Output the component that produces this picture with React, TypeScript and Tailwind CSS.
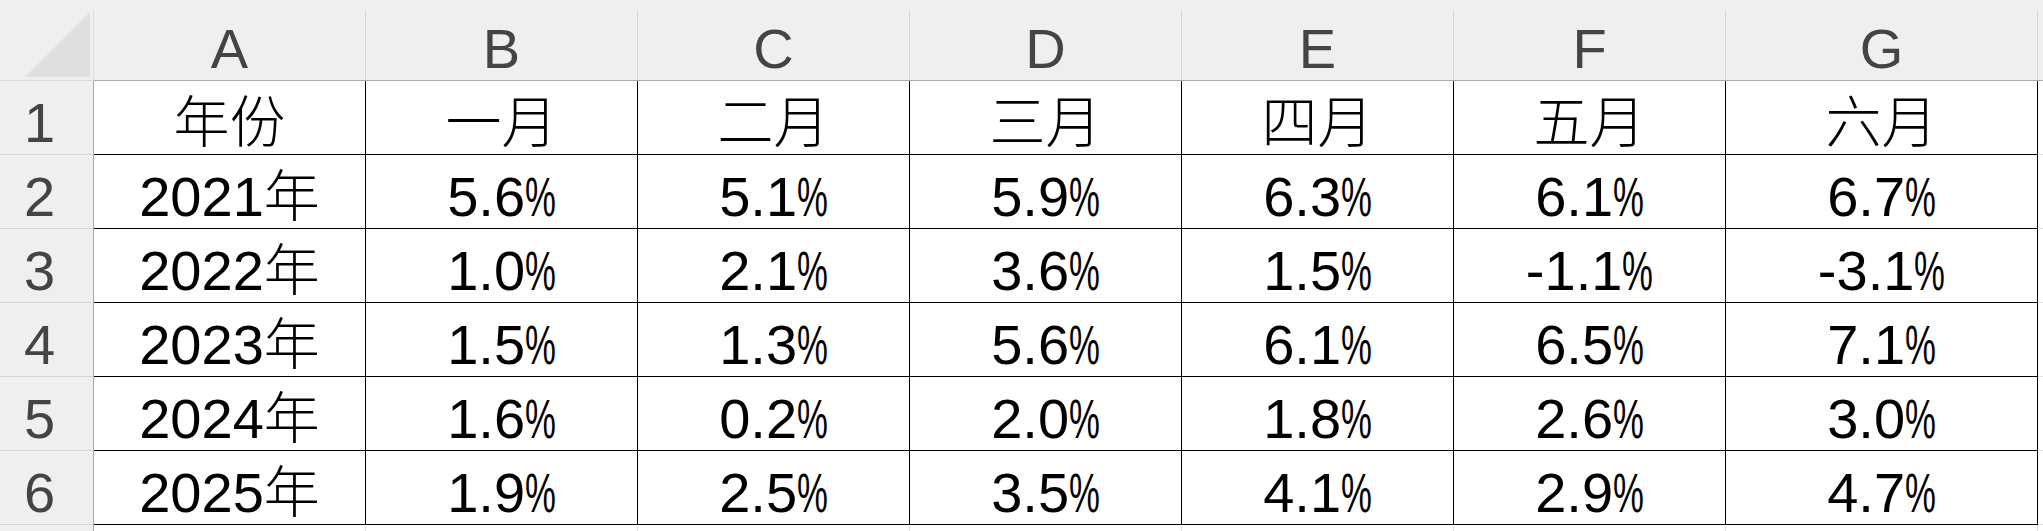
import React from "react";

const cols = ["A", "B", "C", "D", "E", "F", "G"];
const data: string[][] = [
  ["年份", "一月", "二月", "三月", "四月", "五月", "六月"],
  ["2021年", "5.6%", "5.1%", "5.9%", "6.3%", "6.1%", "6.7%"],
  ["2022年", "1.0%", "2.1%", "3.6%", "1.5%", "-1.1%", "-3.1%"],
  ["2023年", "1.5%", "1.3%", "5.6%", "6.1%", "6.5%", "7.1%"],
  ["2024年", "1.6%", "0.2%", "2.0%", "1.8%", "2.6%", "3.0%"],
  ["2025年", "1.9%", "2.5%", "3.5%", "4.1%", "2.9%", "4.7%"],
];

const gridCols = "grid grid-cols-[94px_repeat(6,272px)_312px_1fr]";

function CellText({ text }: { text: string }) {
  if (text.endsWith("%")) {
    return (
      <span className="whitespace-nowrap">
        {text.slice(0, -1)}
        <span className="inline-block w-[0.55em] origin-left scale-x-[0.62]">%</span>
      </span>
    );
  }
  return <span className="whitespace-nowrap">{text}</span>;
}

export default function App() {
  return (
    <div className="h-[531px] w-full overflow-hidden bg-white font-['Liberation_Sans','Noto_Sans_CJK_SC',sans-serif] text-[56px] leading-none">
      {/* Column header row */}
      <div className={`${gridCols} h-[81px]`}>
        <div className="flex h-[81px] bg-[#efefef] border-b border-[#dadada]">
          <div className="flex flex-1 items-end justify-end pb-[3px] pr-[3px]">
            <svg width="65" height="65" viewBox="0 0 65 65">
              <polygon points="0,65 65,65 65,0" fill="#dfdfdf" />
            </svg>
          </div>
          <div className="w-px h-[70px] self-end bg-[#dedede]" />
        </div>
        {cols.map((c) => (
          <div key={c} className="flex h-[81px] bg-[#efefef] border-b border-[#ababab]">
            <div className="flex-1 pt-[21px] text-center text-[#444444]">{c}</div>
            <div className="w-px h-[70px] self-end bg-[#d6d6d6]" />
          </div>
        ))}
        <div className="h-[81px] bg-[#efefef] border-b border-[#ababab]" />
      </div>

      {/* Data rows */}
      {data.map((row, ri) => (
        <div key={ri} className={`${gridCols} h-[74px]`}>
          <div className="h-[74px] bg-[#efefef] border-r border-b border-r-[#a8a8a8] border-b-[#d6d6d6] pr-[14px] pt-[14px] text-center text-[#444444]">
            {ri + 1}
          </div>
          {row.map((cell, ci) => (
            <div
              key={ci}
              className="h-[74px] border-r border-b border-black pt-[14px] text-center font-light text-black"
            >
              <CellText text={cell} />
            </div>
          ))}
          <div className="h-[74px] border-b border-[#e2e2e2]" />
        </div>
      ))}

      {/* Row 7 (only its top edge is visible) */}
      <div className={`${gridCols} h-[74px]`}>
        <div className="h-[74px] bg-[#efefef] border-r border-b border-r-[#a8a8a8] border-b-[#d6d6d6]" />
        {cols.map((c) => (
          <div key={c} className="h-[74px] border-r border-b border-[#e2e2e2]" />
        ))}
        <div className="h-[74px] border-b border-[#e2e2e2]" />
      </div>
    </div>
  );
}
